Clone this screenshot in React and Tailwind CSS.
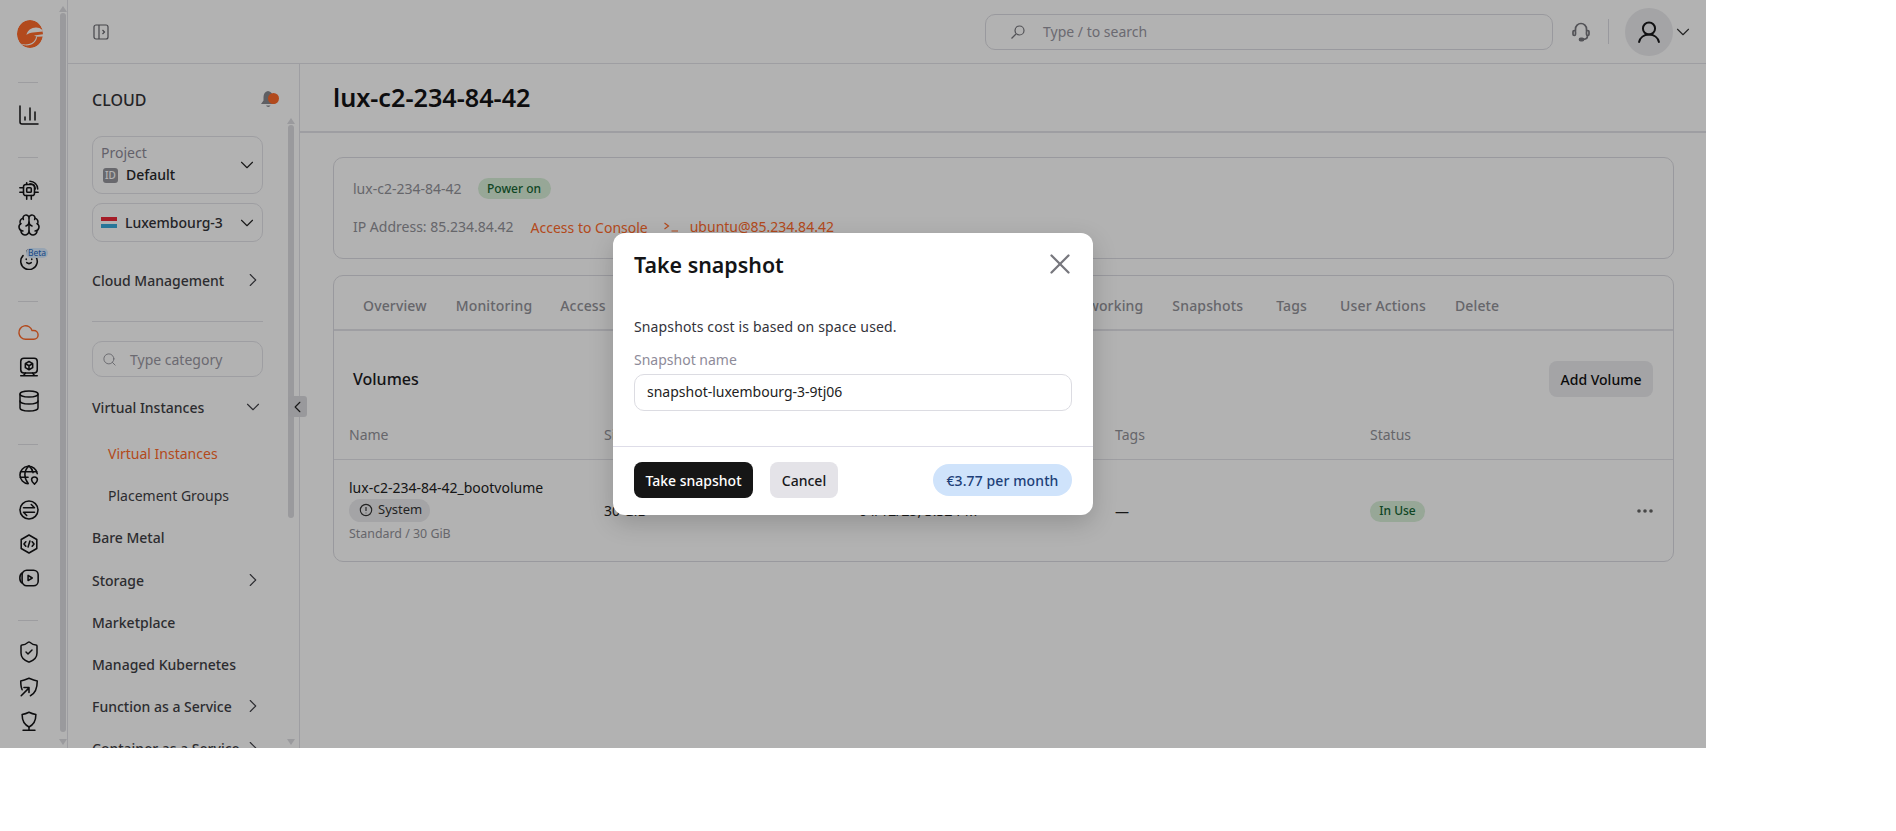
import { Brain, ChartColumn, ChevronDown, ChevronLeft, ChevronRight, Cloud, Database, Search, ShieldCheck, X } from 'lucide-react';

const Glyph = ({ children, className = 'w-[22px] h-[22px] text-[#141416]' }) => (
  <svg viewBox="0 0 24 24" fill="none" stroke="currentColor" strokeWidth="1.7" strokeLinecap="round" strokeLinejoin="round" className={className}>
    {children}
  </svg>
);

const ChipIcon = () => (
  <Glyph>
    <rect x="6" y="6" width="12" height="12" rx="2.5" />
    <rect x="9.5" y="9.5" width="5" height="5" rx="1" />
    <path d="M2 9.5h4M2 14.5h4M9.5 18v4M14.5 18v4M9.5 6V4M18 14.5h4" />
    <path d="M13 2.5a8.5 8.5 0 0 1 8.5 8.5M13 5.2a5.8 5.8 0 0 1 5.8 5.8" />
  </Glyph>
);

const BabyIcon = () => (
  <Glyph>
    <path d="M12 5.5a9 9 0 1 1-6.500 2.800" />
    <path d="M11 5.500c-1.600-.4-1.800-2.800.4-3.500" />
    <path d="M9 12v.5M15 12v.5M9.500 16c1.500 1.200 3.500 1.200 5 0" />
  </Glyph>
);

const MonitorBoxIcon = () => (
  <Glyph>
    <rect x="3" y="2.5" width="18" height="16" rx="3.5" />
    <path d="M12 6l4 2.300v4.400L12 15l-4-2.300V8.300zM8 8.300l4 2.300 4-2.300M12 10.600V15" />
    <path d="M3 21.500h18M8 18.500l-2 3M16 18.500l2 3" />
  </Glyph>
);

const GlobePinIcon = () => (
  <Glyph>
    <path d="M21 10.500A9.500 9.500 0 1 0 11 21.500" />
    <path d="M12 2c-3.500 3-4.500 6.500-4.500 9.500s1 6.500 3.500 9.500M12 2c2.700 2.300 4 5 4.400 7.500M3 8.500h17.500M2.500 14.500H11" />
    <path d="M18 22c-2-1.700-3.200-3.200-3.200-4.700a3.200 3.200 0 0 1 6.400 0c0 1.500-1.200 3-3.200 4.700z" />
  </Glyph>
);

const ExchangeIcon = () => (
  <Glyph>
    <circle cx="12" cy="12" r="9.800" />
    <path d="M6 9.500h12l-3.500-3.500M18 14.500H6l3.500 3.500" />
  </Glyph>
);

const HexCodeIcon = () => (
  <Glyph>
    <path d="M12 2.200l8.500 4.900v9.800L12 21.800l-8.500-4.900V7.100z" />
    <path d="M8.500 9.500L6.500 12l2 2.500M15.500 9.500l2 2.500-2 2.500M13 8.800l-2 6.400" />
  </Glyph>
);

const PlayBoxIcon = () => (
  <Glyph>
    <rect x="4.500" y="3.500" width="17.500" height="17" rx="5" />
    <path d="M4.500 6.500C2.800 7.500 2 9.500 2 12s.8 4.500 2.500 5.500" />
    <path d="M11 9.200v5.600l4.500-2.800z" />
  </Glyph>
);

const ShieldArrowIcon = () => (
  <Glyph>
    <path d="M4.500 15C3.500 13 3 10 3 5.500 6 5 9 3.800 12 2.500c3 1.300 6 2.500 9 3 0 9-2 13.500-7.500 16" />
    <path d="M3.500 21.500l8-8M6.500 12.500h5.500V18" />
  </Glyph>
);

const ShieldStemIcon = () => (
  <Glyph>
    <path d="M12 2.500c2.500 1.200 5 2 7.500 2.500 0 7-2 11-7.500 13.500C6.500 16 4.500 12 4.500 5 7 4.500 9.500 3.700 12 2.500z" />
    <path d="M12 18.500v3.500M5.500 22h13" />
  </Glyph>
);

const Logo = () => (
  <svg viewBox="0 0 26 28" className="w-[26px] h-[28px]">
    <mask id="gmark">
      <ellipse cx="13" cy="14" rx="13" ry="14" fill="white" />
      <path d="M9.500 15C10 10.500 14.500 7.500 19 7.500c2.500 0 4.500.8 6.500 2.500l.5 1.500-10 1C13.500 12.800 11 13.500 9.500 15z" fill="black" />
      <path d="M26 14.300L17 15.500l3 1.300 6-.3z" fill="black" />
      <path d="M0 5.500C2 2 6 .5 9 .2L0 0zM3 23.500c4.500 3 10.500 2.500 14-.8 2-1.900 3-4 3-6.200h-1c0 2-1 3.800-2.500 5.200-3.500 3-8.500 3.300-13.500 1.800z" fill="black" />
    </mask>
    <ellipse cx="13" cy="14" rx="13" ry="14" fill="#ff6a2a" mask="url(#gmark)" />
  </svg>
);

const Triangle = ({ down }) => (
  <svg viewBox="0 0 8 6" className="w-[8px] h-[6px]">
    <path d={down ? 'M0 0h8L4 6z' : 'M4 0l4 6H0z'} fill="#dddde1" />
  </svg>
);

const Scrollbar = ({ top, thumb }) => (
  <div className="h-full flex flex-col items-center w-[7px]" style={{ paddingTop: top }}>
    <Triangle />
    <div className="w-[6px] mt-[1px] rounded-full bg-[#dddde1]" style={{ height: thumb }} />
    <div className="mt-auto mb-[3px]">
      <Triangle down />
    </div>
  </div>
);

const RailDivider = () => <div className="h-px w-[20px] mx-[18px] bg-[#e1e1e6]" />;

const RailIcon = ({ children }) => (
  <div className="h-[34.3px] flex items-center justify-center relative">{children}</div>
);

const Rail = () => (
  <div className="w-[68px] shrink-0 h-full flex border-r border-[#e3e3e8]">
    <div className="w-[57px] mr-[2px] shrink-0">
      <div className="mt-[17px] mb-[31px] pl-[3px] h-[34px] flex items-center justify-center">
        <Logo />
      </div>
      <RailDivider />
      <div className="mt-[15px] mb-[25px]">
        <RailIcon><ChartColumn strokeWidth={1.5} className="w-6 h-6 text-[#141416]" /></RailIcon>
      </div>
      <RailDivider />
      <div className="mt-[15px] mb-[25px]">
        <RailIcon><ChipIcon /></RailIcon>
        <RailIcon><Brain strokeWidth={1.5} className="w-6 h-6 text-[#141416]" /></RailIcon>
        <RailIcon>
          <BabyIcon />
          <span className="absolute left-[26px] top-[6px] h-[10px] w-[22px] rounded-full bg-[#d8ebff] text-[8.5px] leading-[10px] text-center text-[#1f66c1]">Beta</span>
        </RailIcon>
      </div>
      <RailDivider />
      <div className="mt-[13px] mb-[26px]">
        <RailIcon><Cloud strokeWidth={1.5} className="w-[23px] h-[23px] text-[#ff6a2a]" /></RailIcon>
        <RailIcon><MonitorBoxIcon /></RailIcon>
        <RailIcon><Database strokeWidth={1.5} className="w-6 h-6 text-[#141416]" /></RailIcon>
      </div>
      <RailDivider />
      <div className="mt-[13px] mb-[25px]">
        <RailIcon><GlobePinIcon /></RailIcon>
        <RailIcon><ExchangeIcon /></RailIcon>
        <RailIcon><HexCodeIcon /></RailIcon>
        <RailIcon><PlayBoxIcon /></RailIcon>
      </div>
      <RailDivider />
      <div className="mt-[14px]">
        <RailIcon><ShieldCheck strokeWidth={1.5} className="w-6 h-6 text-[#141416]" /></RailIcon>
        <RailIcon><ShieldArrowIcon /></RailIcon>
        <RailIcon><ShieldStemIcon /></RailIcon>
      </div>
    </div>
    <Scrollbar top={6} thumb={719} />
  </div>
);

const NavRow = ({ label, icon, sub, active, className = '' }) => (
  <div className={`h-[42px] shrink-0 flex items-center justify-between text-[14px] ${sub ? 'pl-4 font-normal' : 'font-medium'} ${active ? 'text-[#ff6a2a]' : 'text-[#3f3f46]'} ${className}`}>
    <span className="whitespace-nowrap">{label}</span>
    {icon === 'right' && <ChevronRight strokeWidth={1.2} className="w-[22px] h-[22px] -mr-[1px] shrink-0" />}
    {icon === 'down' && <ChevronDown strokeWidth={1.2} className="w-[22px] h-[22px] -mr-[1px] shrink-0" />}
  </div>
);

const BellDot = () => (
  <div className="relative w-[20px] h-[20px]">
    <svg viewBox="0 0 20 20" className="w-[20px] h-[20px]">
      <path d="M9 1c-3 .6-4.500 3-4.500 6v3.500L2 14h14l-2-3V7c0-3-2-5.400-5-6z" fill="#88888e" />
      <path d="M7 15.500a2.500 2.500 0 0 0 4.500 0z" fill="#88888e" />
    </svg>
    <span className="absolute left-[9px] top-[3px] w-[11px] h-[11px] rounded-full bg-[#ff6a2a]" />
  </div>
);

const Sidebar = () => (
  <div className="w-[232px] shrink-0 h-full relative flex border-r border-[#e3e3e8]">
    <div className="w-[171px] ml-6 shrink-0 flex flex-col">
      <div className="mt-6 h-6 flex items-center justify-between">
        <span className="text-[16px] font-medium text-[#333338]">CLOUD</span>
        <div className="-mr-[16px]"><BellDot /></div>
      </div>
      <div className="mt-6 h-[58px] shrink-0 rounded-[10px] border border-[#e3e3e8] pl-[8px] pr-[4px] pb-[2px] flex items-center justify-between">
        <div className="flex flex-col">
          <span className="text-[14px] leading-[20px] text-[#8e8b99]">Project</span>
          <div className="flex items-center mt-[2px] ml-[2px]">
            <span className="w-[15px] h-[15px] rounded-[3px] bg-[#96969c] text-white text-[10px] leading-[15px] text-center font-medium">ID</span>
            <span className="ml-[8px] text-[14px] font-medium leading-[20px] text-[#27272a]">Default</span>
          </div>
        </div>
        <ChevronDown strokeWidth={1.2} className="w-[22px] h-[22px] mt-[1px] text-[#222]" />
      </div>
      <div className="mt-[9px] h-[39px] shrink-0 rounded-[10px] border border-[#e3e3e8] pl-[8px] pr-[4px] flex items-center justify-between">
        <div className="flex items-center">
          <div className="w-[16px] h-[11px] flex flex-col">
            <div className="h-1/3 bg-[#ed2939]" />
            <div className="h-1/3 bg-white" />
            <div className="h-1/3 bg-[#39a9dc]" />
          </div>
          <span className="ml-2 text-[14px] font-medium text-[#333338]">Luxembourg-3</span>
        </div>
        <ChevronDown strokeWidth={1.2} className="w-[22px] h-[22px] text-[#222]" />
      </div>
      <NavRow label="Cloud Management" icon="right" className="mt-[17px]" />
      <div className="mt-[20px] h-px shrink-0 bg-[#e3e3e8]" />
      <div className="mt-[19px] h-[36px] shrink-0 rounded-[10px] border border-[#e3e3e8] pl-[9px] flex items-center">
        <Search strokeWidth={1.4} className="w-[15px] h-[15px] text-[#8e8e96]" />
        <span className="ml-[13px] text-[14px] text-[#9a98a3]">Type category</span>
      </div>
      <NavRow label="Virtual Instances" icon="down" className="mt-[9px]" />
      <NavRow label="Virtual Instances" sub active className="mt-[4px]" />
      <NavRow label="Placement Groups" sub />
      <NavRow label="Bare Metal" />
      <NavRow label="Storage" icon="right" className="mt-[1px]" />
      <NavRow label="Marketplace" />
      <NavRow label="Managed Kubernetes" />
      <NavRow label="Function as a Service" icon="right" />
      <NavRow label="Container as a Service" icon="right" />
    </div>
    <div className="ml-6">
      <Scrollbar top={54} thumb={393} />
    </div>
    <div className="absolute left-[220px] top-[332px] w-[19px] h-[21px] rounded-[3px] bg-[#dcdce0] flex items-center justify-center">
      <ChevronLeft strokeWidth={1.4} className="w-[20px] h-[20px] text-[#222]" />
    </div>
  </div>
);

const Header = () => (
  <div className="h-[64px] shrink-0 border-b border-[#e3e3e8] flex items-center pl-[25px]">
    <svg viewBox="0 0 16 16" fill="none" stroke="#64646b" strokeWidth="1.2" className="w-[16px] h-[16px]">
      <rect x="1" y="1" width="14" height="14" rx="2" />
      <path d="M6 1v14M9.500 6l2 2-2 2" />
    </svg>
    <div className="ml-[876px] w-[568px] h-[36px] rounded-[10px] border border-[#dcdce2] flex items-center pl-[24px]">
      <svg viewBox="0 0 16 16" fill="none" stroke="#77777d" strokeWidth="1.200" className="w-[16px] h-[16px]">
        <circle cx="9.500" cy="6.500" r="4.500" />
        <path d="M6 10l-4.500 4.500" />
      </svg>
      <span className="ml-[17px] text-[14px] text-[#9a98a3]">Type / to search</span>
    </div>
    <svg viewBox="0 0 24 24" fill="none" stroke="#77777d" strokeWidth="1.700" strokeLinecap="round" className="ml-[16px] w-[24px] h-[24px]">
      <path d="M6.500 10.500V9a5.500 5.500 0 0 1 11 0v1.500M18.500 15.500c0 2.500-1.800 3.800-4 3.800" />
      <rect x="4" y="10.500" width="2.500" height="5" rx="1.200" />
      <rect x="17.500" y="10.500" width="2.500" height="5" rx="1.200" />
      <rect x="10.500" y="18.300" width="4" height="2.400" rx="1.200" fill="#77777d" />
    </svg>
    <div className="ml-[15px] w-px h-[25px] bg-[#dcdce2]" />
    <div className="ml-[16px] w-[48px] h-[48px] rounded-full bg-[#ebebee] flex items-center justify-center">
      <svg viewBox="0 0 24 24" fill="none" stroke="#19191b" strokeWidth="1.700" strokeLinecap="round" className="w-[28px] h-[28px]">
        <circle cx="12" cy="9" r="5.200" />
        <path d="M3.500 20.500c.8-3.600 4-6.300 8.500-6.300s7.700 2.700 8.500 6.300" />
      </svg>
    </div>
    <ChevronDown strokeWidth={1.2} className="ml-[-1px] w-[22px] h-[22px] text-[#333]" />
  </div>
);

const Badge = ({ children, className = '' }) => (
  <span className={`inline-flex items-center justify-center rounded-full bg-[#d8efd8] text-[#166534] text-[12px] font-medium ${className}`}>
    {children}
  </span>
);

const Tabs = () => (
  <div className="h-[55px] pt-[5px] border-b-2 border-[#e3e3e8] flex items-center pl-[29px] text-[14px] font-medium tracking-[0.15px] text-[#929299] whitespace-nowrap">
    <span>Overview</span>
    <span className="ml-[29px]">Monitoring</span>
    <span className="ml-[28px]">Access</span>
    <span className="ml-[457px]">Networking</span>
    <span className="ml-[29px]">Snapshots</span>
    <span className="ml-[33px]">Tags</span>
    <span className="ml-[33px]">User Actions</span>
    <span className="ml-[29px]">Delete</span>
  </div>
);

const Volumes = () => (
  <div>
    <div className="h-[129px] border-b border-[#e3e3e8] relative">
      <div className="flex items-center justify-between pl-[19px] pr-[20px] pt-[30px]">
        <span className="text-[16px] font-medium text-[#1c1c1f]">Volumes</span>
        <span className="w-[104px] h-[36px] rounded-[8px] bg-[#ebebee] flex items-center justify-center text-[14px] font-medium text-[#111]">Add Volume</span>
      </div>
      <div className="grid grid-cols-[255px_255px_256px_255px_1fr] pl-[15px] mt-[27px] text-[14px] text-[#929299]">
        <span>Name</span>
        <span>Size</span>
        <span>Created on</span>
        <span>Tags</span>
        <span>Status</span>
      </div>
    </div>
    <div className="grid grid-cols-[255px_255px_256px_255px_1fr] items-center pl-[15px] pr-[20px] h-[100px] text-[14px] text-[#222]">
      <div className="flex flex-col items-start">
        <span className="leading-[20px] whitespace-nowrap">lux-c2-234-84-42_bootvolume</span>
        <span className="mt-[1px] h-[23px] w-[81px] rounded-full bg-[#ebebee] flex items-center pl-[10px] text-[13px] text-[#333]">
          <svg viewBox="0 0 16 16" fill="none" stroke="#333" strokeWidth="1.300" className="w-[14px] h-[14px] mr-[5px]">
            <circle cx="8" cy="8" r="6.500" />
            <path d="M8 4.500v4.500M8 11v.8" />
          </svg>
          System
        </span>
        <span className="mt-[3px] text-[12.4px] leading-[18px] text-[#929299]">Standard / 30 GiB</span>
      </div>
      <span>30 GiB</span>
      <span>04/12/25, 3:32 PM</span>
      <span className="pt-[2px]">—</span>
      <div className="flex items-center justify-between pt-[2px]">
        <Badge className="w-[55px] h-[21px]">In Use</Badge>
        <svg viewBox="0 0 16 4" className="w-[16px] h-[4px]" fill="#666">
          <circle cx="2" cy="2" r="1.800" />
          <circle cx="8" cy="2" r="1.800" />
          <circle cx="14" cy="2" r="1.800" />
        </svg>
      </div>
    </div>
  </div>
);

const Content = () => (
  <div className="flex-1 min-w-0 h-full">
    <div className="h-[69px] border-b-2 border-[#e3e3e8] pl-[33px] flex items-center">
      <h1 className="text-[25.2px] font-semibold text-[#141416]">lux-c2-234-84-42</h1>
    </div>
    <div className="px-[33px] pt-[24px]">
      <div className="w-[1341px] h-[102px] rounded-[10px] border border-[#dcdce2] pl-[19px] pt-[20px] text-[14px]">
        <div className="flex items-center h-[21px]">
          <span className="text-[#929299]">lux-c2-234-84-42</span>
          <Badge className="ml-[16px] w-[73px] h-[21px]">Power on</Badge>
        </div>
        <div className="flex items-center h-[21px] mt-[17px] whitespace-nowrap">
          <span className="text-[#929299]">IP Address: 85.234.84.42</span>
          <span className="ml-[17px] text-[#ff6a2a] pt-[1px]">Access to Console</span>
          <svg viewBox="0 0 14 10" fill="none" stroke="#ff6a2a" strokeWidth="1.200" className="ml-[16px] w-[14px] h-[10px]">
            <path d="M0.500 1l4 3-4 3M7.500 9H14" />
          </svg>
          <span className="ml-[12px] text-[#ff6a2a]">ubuntu@85.234.84.42</span>
        </div>
      </div>
      <div className="w-[1341px] h-[287px] mt-[16px] rounded-[10px] border border-[#dcdce2]">
        <Tabs />
        <Volumes />
      </div>
    </div>
  </div>
);

const SnapshotDialog = () => (
  <div className="absolute inset-0 bg-black/30 flex items-center justify-center">
    <div className="w-[480px] h-[282px] rounded-[12px] bg-white shadow-[0_8px_24px_rgba(0,0,0,0.18)] flex flex-col">
      <div className="h-[64px] shrink-0 pl-[21px] pr-[16px] flex items-center justify-between">
        <h2 className="text-[21.4px] font-semibold text-[#141416]">Take snapshot</h2>
        <X strokeWidth={1.6} className="w-[34px] h-[34px] text-[#77777d] -mt-[2px]" />
      </div>
      <div className="px-[21px] flex-1">
        <p className="mt-[19px] text-[14px] tracking-[0.13px] leading-[22px] text-[#33333a]">Snapshots cost is based on space used.</p>
        <p className="mt-[12px] text-[14px] leading-[20px] text-[#8e8b99]">Snapshot name</p>
        <div className="mt-[4px] h-[37px] rounded-[10px] border border-[#dcdce2] pl-[12px] pb-[2px] flex items-center text-[14px] text-[#222]">snapshot-luxembourg-3-9tj06</div>
      </div>
      <div className="h-[69px] shrink-0 border-t border-[#dedde8] px-[21px] pb-[2px] flex items-center">
        <span className="w-[119px] h-[36px] rounded-[8px] bg-[#161616] text-white text-[14px] font-medium flex items-center justify-center">Take snapshot</span>
        <span className="ml-[17px] w-[68px] h-[36px] rounded-[8px] bg-[#e4e3e8] text-[#17171a] text-[14px] font-medium flex items-center justify-center">Cancel</span>
        <span className="ml-auto w-[139px] h-[32px] rounded-full bg-[#cfe3fb] text-[#1d3f78] text-[14px] font-medium tracking-[0.1px] flex items-center justify-center">€3.77 per month</span>
      </div>
    </div>
  </div>
);

const App = () => (
  <div className="w-[1706px] h-[748px] relative flex overflow-hidden bg-white font-['Noto_Sans',sans-serif]">
    <Rail />
    <div className="flex-1 min-w-0 h-full flex flex-col">
      <Header />
      <div className="flex-1 min-h-0 flex">
        <Sidebar />
        <Content />
      </div>
    </div>
    <SnapshotDialog />
  </div>
);

export default App;
